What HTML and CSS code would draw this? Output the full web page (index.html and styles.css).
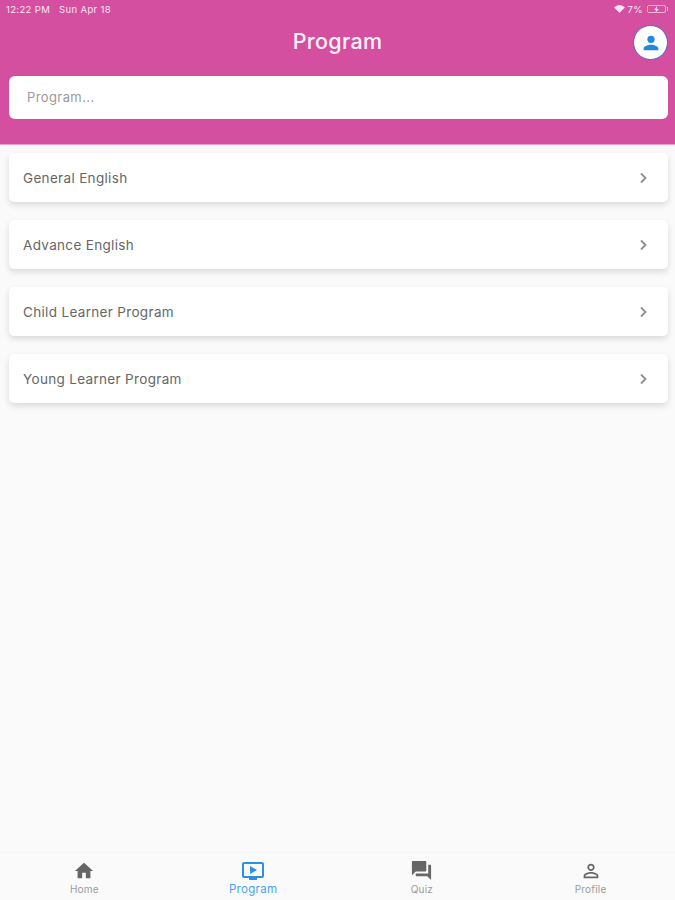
FILE: index.html
```html
<!DOCTYPE html>
<html lang="en">
<head>
<meta charset="utf-8">
<title>Program</title>
<link rel="stylesheet" href="styles.css">
</head>
<body>
<div class="app">
  <header class="header">
    <div class="status">
      <div class="status-left"><span>12:22 PM</span><span>Sun Apr 18</span></div>
      <div class="status-right">
        <svg class="wifi" viewBox="0 0 24 18" width="11" height="8"><path fill="#fff" d="M12 18 0 5.500C3.200 2.200 7.400 0 12 0s8.800 2.200 12 5.500Z"/></svg>
        <span>7%</span>
        <span class="battery"><span class="battery-level"></span><svg class="bolt" viewBox="0 0 8 12" width="5" height="7"><path fill="#fff" d="M5 0 0 7h3l-1 5 6-7H4.500Z"/></svg></span><span class="battery-cap"></span>
      </div>
    </div>
    <div class="title-row">
      <h1 class="title">Program</h1>
      <div class="avatar">
        <svg viewBox="0 0 24 24" width="22" height="22"><path fill="#1e88e5" d="M12 12a4 4 0 1 0 0-8 4 4 0 0 0 0 8Zm0 2c-2.700 0-8 1.300-8 4v2h16v-2c0-2.700-5.300-4-8-4Z"/></svg>
      </div>
    </div>
    <div class="search">Program...</div>
  </header>

  <main class="list">
    <div class="card"><span>General English</span><svg class="chev" viewBox="0 0 10 14" width="10" height="14"><path d="M3 2.500 7.500 7 3 11.500" fill="none" stroke="#8f8f8f" stroke-width="1.800"/></svg></div>
    <div class="card"><span>Advance English</span><svg class="chev" viewBox="0 0 10 14" width="10" height="14"><path d="M3 2.500 7.500 7 3 11.500" fill="none" stroke="#8f8f8f" stroke-width="1.800"/></svg></div>
    <div class="card"><span>Child Learner Program</span><svg class="chev" viewBox="0 0 10 14" width="10" height="14"><path d="M3 2.500 7.500 7 3 11.500" fill="none" stroke="#8f8f8f" stroke-width="1.800"/></svg></div>
    <div class="card"><span>Young Learner Program</span><svg class="chev" viewBox="0 0 10 14" width="10" height="14"><path d="M3 2.500 7.500 7 3 11.500" fill="none" stroke="#8f8f8f" stroke-width="1.800"/></svg></div>
  </main>

  <nav class="tabs">
    <div class="tab">
      <div class="tab-icon"><svg viewBox="0 0 24 24" width="22" height="22"><path fill="#666" d="M10 20v-6h4v6h5v-8h3L12 3 2 12h3v8Z"/></svg></div>
      <span>Home</span>
    </div>
    <div class="tab tab-active">
      <div class="tab-icon"><svg viewBox="0 0 24 24" width="24" height="24"><path fill="#2a90e8" d="M21 3H3c-1.100 0-2 .9-2 2v12c0 1.100.9 2 2 2h5v2h8v-2h5c1.100 0 2-.9 2-2V5c0-1.100-.9-2-2-2Zm0 14H3V5h18v12ZM16 11l-7 4V7Z"/></svg></div>
      <span>Program</span>
    </div>
    <div class="tab">
      <div class="tab-icon"><svg viewBox="0 0 24 24" width="23" height="23"><path fill="#666" d="M21 6h-2v9H6v2c0 .55.45 1 1 1h11l4 4V7c0-.55-.45-1-1-1Zm-4 6V3c0-.55-.45-1-1-1H3c-.55 0-1 .45-1 1v14l4-4h10c.55 0 1-.45 1-1Z"/></svg></div>
      <span>Quiz</span>
    </div>
    <div class="tab">
      <div class="tab-icon"><svg viewBox="0 0 24 24" width="22" height="22"><path fill="#666" d="M12 5.900a2.100 2.100 0 1 1 0 4.200 2.100 2.100 0 0 1 0-4.200m0 9c2.970 0 6.100 1.460 6.100 2.100v1.100H5.900V17c0-.64 3.130-2.100 6.100-2.100M12 4C9.790 4 8 5.790 8 8s1.790 4 4 4 4-1.790 4-4-1.790-4-4-4Zm0 9c-2.670 0-8 1.340-8 4v3h16v-3c0-2.660-5.330-4-8-4Z"/></svg></div>
      <span>Profile</span>
    </div>
  </nav>
</div>
</body>
</html>
```

FILE: styles.css
```css
* { box-sizing: border-box; }
html, body { margin: 0; padding: 0; }
body {
  width: 675px;
  height: 900px;
  overflow: hidden;
  font-family: "Inter", "Liberation Sans", sans-serif;
  background: #fafafa;
}
.app { display: flex; flex-direction: column; height: 900px; }
.header {
  height: 145px;
  flex: none;
  background: #d54fa1;
  padding: 0 7px 0 9px;
  display: flex;
  flex-direction: column;
  border-bottom: 1px solid #ea9fce;
}
.status {
  height: 18px;
  margin-left: -3px;
  display: flex;
  justify-content: space-between;
  align-items: center;
  color: #fff;
  font-size: 9.500px;
  letter-spacing: .35px;
  opacity: .85;
}
.status-left { display: flex; gap: 9px; }
.status-right { display: flex; align-items: center; gap: 3px; }
.battery {
  width: 19px;
  height: 8px;
  border: 1px solid #f3c6e0;
  border-radius: 2px;
  position: relative;
  display: flex;
  align-items: center;
  justify-content: center;
  margin-left: 1px;
}
.battery-level { position: absolute; left: 0; top: 0; bottom: 0; width: 2px; background: #ef4f4f; }
.battery-cap { width: 1px; height: 4px; background: #f3c6e0; margin-left: -2px; }
.title-row {
  height: 58px;
  display: flex;
  align-items: center;
  justify-content: center;
  position: relative;
}
.title {
  margin: 0 0 10px;
  padding: 0 2px 0 0;
  font-size: 21.500px;
  font-weight: 500;
  letter-spacing: .3px;
  color: #fdf3f9;
  line-height: 1;
}
.avatar {
  position: absolute;
  right: 0;
  top: 7px;
  width: 35px;
  height: 35px;
  border-radius: 50%;
  background: #fff;
  border: 1px solid #5a5fc0;
  display: flex;
  align-items: center;
  justify-content: center;
}
.search {
  height: 43px;
  background: #fff;
  border-radius: 6px;
  padding: 0 0 2px 18px;
  display: flex;
  align-items: center;
  font-size: 13px;
  letter-spacing: .4px;
  color: #999;
}
.list {
  flex: 1;
  padding: 8px 7px 0 9px;
  display: flex;
  flex-direction: column;
  gap: 18px;
  background: #fafafa;
}
.card {
  height: 49px;
  background: #fff;
  border-radius: 5px;
  box-shadow: 0 3px 6px rgba(0,0,0,.13);
  display: flex;
  align-items: center;
  justify-content: space-between;
  padding: 0 20px 0 14px;
  font-size: 13.500px;
  letter-spacing: .33px;
  color: #666;
}
.tabs {
  height: 48px;
  flex: none;
  display: grid;
  grid-template-columns: repeat(4, 1fr);
  background: #fafafa;
  border-top: 1px solid #f6f6f6;
}
.tab {
  display: flex;
  flex-direction: column;
  align-items: center;
  padding-top: 6px;
  font-size: 10px;
  letter-spacing: .2px;
  color: #9a9a9a;
}
.tab-icon {
  height: 23px;
  display: flex;
  align-items: center;
  justify-content: center;
}
.tab span { line-height: 12px; margin-top: 1px; }
.tab-active { color: #4ba3ee; font-size: 11.500px; letter-spacing: .3px; }
```
